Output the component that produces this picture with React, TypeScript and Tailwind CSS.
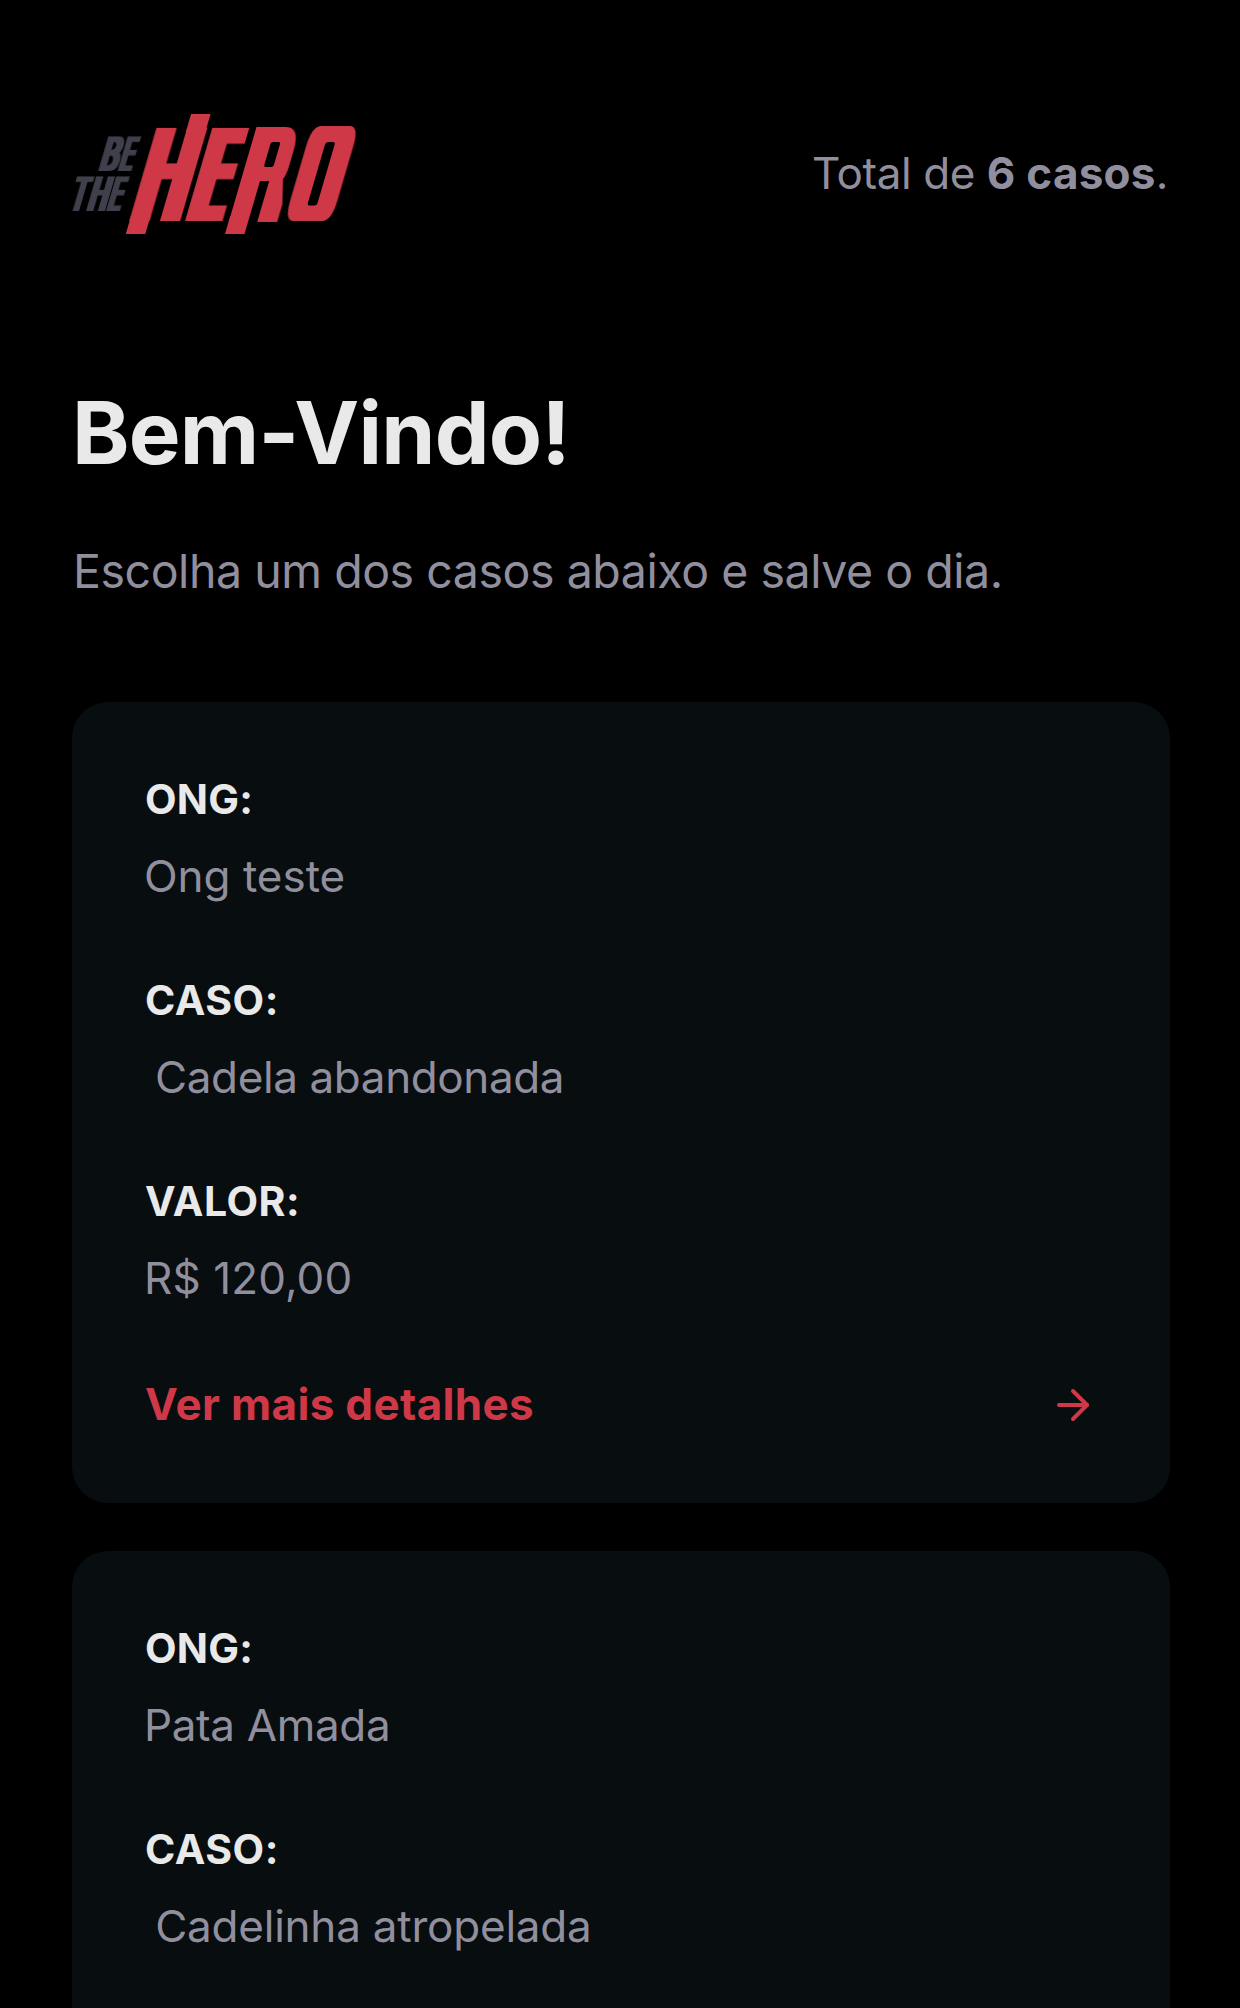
import { FiArrowRight } from "react-icons/fi";

type LetterProps = {
  char: string;
  x: number;
  y: number;
  sx: number;
  sy: number;
  size: number;
  filter: string;
};

function Letter({ char, x, y, sx, sy, size, filter }: LetterProps) {
  return (
    <g filter={`url(#${filter})`}>
      <text transform={`translate(${x} ${y}) scale(${sx} ${sy})`} fontSize={size}>
        {char}
      </text>
    </g>
  );
}

function Logo() {
  return (
    <svg
      width="288"
      height="120"
      viewBox="72 114 288 120"
      className="overflow-visible font-['DejaVu_Sans_Mono']"
      role="img"
      aria-label="Be The Hero"
    >
      <defs>
        <filter id="wide" x="-50%" y="-50%" width="200%" height="200%">
          <feMorphology operator="dilate" radius="6.4 3.3" />
        </filter>
        <filter id="wider" x="-50%" y="-50%" width="200%" height="200%">
          <feMorphology operator="dilate" radius="7.4 3.3" />
        </filter>
        <filter id="bowl" x="-50%" y="-50%" width="200%" height="200%">
          <feMorphology operator="dilate" radius="9.4 8.4" />
        </filter>
        <filter id="block" x="-150%" y="-100%" width="400%" height="300%">
          <feMorphology operator="dilate" radius="14.4 26.4" />
        </filter>
        <filter id="small" x="-50%" y="-50%" width="200%" height="200%">
          <feMorphology operator="dilate" radius="2.3 1.3" />
        </filter>
      </defs>
      <g transform="translate(0 221) skewX(-16.3)" fill="#cf3846">
        <Letter char="H" x={129.8} y={-3} sx={0.83} sy={1.2} size={100} filter="wide" />
        <rect x="129.6" y="-5" width="19.5" height="18" />
        <rect x="159.8" y="-107" width="19.5" height="18" />
        <Letter char="E" x={186.9} y={-3} sx={0.53} sy={1.2} size={100} filter="wider" />
        <Letter char="R" x={234} y={-8} sx={0.575} sy={1.06} size={100} filter="bowl" />
        <rect x="228.8" y="-5" width="19.5" height="18" />
        <Letter char="O" x={296} y={-26.8} sx={0.394} sy={0.55} size={100} filter="block" />
        {/* counters */}
        <g className="fill-black">
          <rect x="247.9" y="-79" width="9.6" height="25" rx="2" />
          <rect x="248.3" y="-40" width="9.2" height="41" />
          <rect x="302.6" y="-79" width="9.7" height="63.5" rx="2.5" />
        </g>
      </g>
      <g transform="translate(0 171) skewX(-16.3)" fill="#41414d">
        <Letter char="B" x={97.7} y={-1} sx={0.7} sy={1} size={44} filter="small" />
        <Letter char="E" x={117.5} y={-1} sx={0.5} sy={1} size={44} filter="small" />
      </g>
      <g transform="translate(0 211) skewX(-16.3)" fill="#41414d">
        <Letter char="T" x={68.4} y={-1} sx={0.55} sy={1} size={44} filter="small" />
        <Letter char="H" x={85.9} y={-1} sx={0.72} sy={1} size={44} filter="small" />
        <Letter char="E" x={106} y={-1} sx={0.5} sy={1} size={44} filter="small" />
      </g>
    </svg>
  );
}

function Field({ label, value, labelClass, valueClass }: { label: string; value: string; labelClass: string; valueClass: string }) {
  return (
    <div>
      <div className={`text-[41px] leading-[50px] font-bold text-[#e9e9e9] ${labelClass}`}>{label}</div>
      <div className={`mt-[25px] text-[44px] leading-[54px] whitespace-pre text-[#918f9e] ${valueClass}`}>{value}</div>
    </div>
  );
}

type Incident = { ong: string; caso: string; valor?: string; ongClass: string; casoClass: string };

const incidents: Incident[] = [
  { ong: "Ong teste", caso: " Cadela abandonada", valor: "R$ 120,00", ongClass: "-ml-px tracking-[-0.03px]", casoClass: "tracking-[-0.38px]" },
  { ong: "Pata Amada", caso: " Cadelinha atropelada", ongClass: "-ml-px tracking-[-0.35px]", casoClass: "tracking-[-0.22px]" },
];

function Card({ item }: { item: Incident }) {
  return (
    <article className="min-h-[801px] rounded-[36px] bg-[#080d0f] pt-[72px] pr-[73px] pb-[74px] pl-[73px]">
      <div className="flex flex-col gap-[72px]">
        <Field label="ONG:" value={item.ong} labelClass="tracking-[0.2px]" valueClass={item.ongClass} />
        <Field label="CASO:" value={item.caso} labelClass="tracking-[0.5px]" valueClass={`-ml-[2px] ${item.casoClass}`} />
        {item.valor && <Field label="VALOR:" value={item.valor} labelClass="tracking-[0.5px]" valueClass="-ml-px tracking-[0.1px]" />}
      </div>
      {item.valor && (
        <button className="mt-[76px] flex h-12 w-full items-center justify-between text-[#cf3846]">
          <span className="pb-[2px] text-[44px] leading-[54px] font-bold tracking-[0.33px]">Ver mais detalhes</span>
          <FiArrowRight className="size-12" />
        </button>
      )}
    </article>
  );
}

export default function App() {
  return (
    <div className="h-[2008px] overflow-hidden bg-black pt-[114px] pr-[70px] pl-[72px] font-['Inter',sans-serif]">
      <header className="flex h-[120px] items-center justify-between">
        <Logo />
        <p className="pr-[2px] pb-[2px] text-[44px] leading-[54px] tracking-[-0.42px] text-[#918f9e]">
          Total de <strong className="font-bold tracking-[0.25px]">6 casos</strong>.
        </p>
      </header>
      <h1 className="mt-[147px] text-[87px] leading-[104px] font-bold tracking-[-0.8px] text-[#e9e9e9]">Bem-Vindo!</h1>
      <p className="mt-[58px] pl-px text-[46.5px] leading-[56px] tracking-[-0.46px] text-[#918f9e]">
        Escolha um dos casos abaixo e salve o dia.
      </p>
      <main className="mt-[103px] flex flex-col gap-12">
        {incidents.map((item) => (
          <Card key={item.ong} item={item} />
        ))}
      </main>
    </div>
  );
}
